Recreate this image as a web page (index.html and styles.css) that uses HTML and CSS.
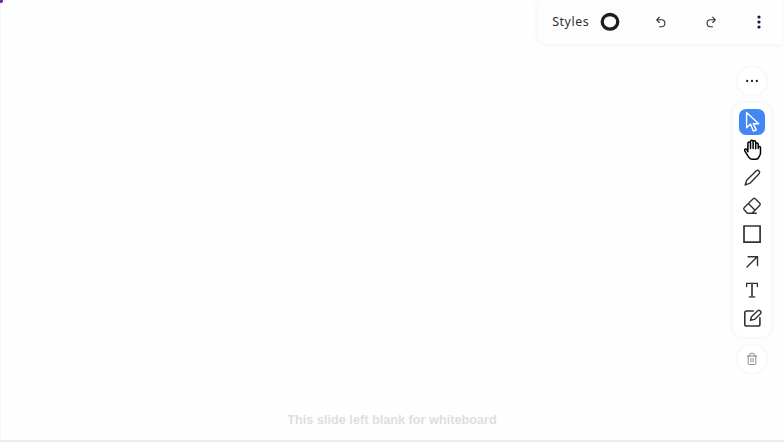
FILE: index.html
```
<!DOCTYPE html>
<html lang="en">
<head>
<meta charset="utf-8">
<title>Whiteboard</title>
<link rel="stylesheet" href="styles.css">
</head>
<body>
<main class="board">
  <span class="pen-mark"></span>
  <header class="topbar">
    <button class="styles-button"><span class="styles-label">Styles</span>
      <svg width="20" height="20" viewBox="0 0 20 20"><ellipse cx="10" cy="9.8" rx="7.8" ry="7.3" fill="none" stroke="#1d1d1d" stroke-width="3.3"/></svg>
    </button>
    <button class="history undo" aria-label="Undo"><svg viewBox="0 0 12 12"><path d="M4.3 1.2 1.7 3.8l2.6 2.7M1.9 3.8h4.5a3.5 3.5 0 0 1 0 7H4.5"/></svg></button>
    <button class="history redo" aria-label="Redo"><svg viewBox="0 0 12 12"><path d="m7.7 1.2 2.6 2.6-2.6 2.7M10.1 3.8H5.6a3.5 3.5 0 0 0 0 7h1.9"/></svg></button>
    <button class="menu" aria-label="Menu"><svg width="4" height="14" viewBox="0 0 4 14"><g fill="#0b1c33"><circle cx="2" cy="2" r="1.6"/><circle cx="2" cy="7" r="1.6"/><circle cx="2" cy="12" r="1.6"/></g></svg></button>
  </header>
  <aside class="dock">
    <button class="round" aria-label="More"><svg viewBox="0 0 28 28"><g fill="#222"><circle cx="9.2" cy="14" r="1.15"/><circle cx="14" cy="14" r="1.15"/><circle cx="18.8" cy="14" r="1.15"/></g></svg></button>
    <nav class="tools">
      <button class="tool selected" aria-label="Select"><svg viewBox="0 0 28 28"><path stroke="#fff" stroke-width="1.4" d="M8.6 4.5v15.2l3.9-3.8 2.8 7.2 3-1.2-3-6.2h5.4z"/></svg></button>
      <button class="tool hand" aria-label="Pan"><svg viewBox="0 0 28 28"><path stroke="#000" stroke-width="1.5" d="M9.9 15.8V7.3c0-1.8 2.6-1.8 2.6 0v5.2V5.8c0-2 2.6-2 2.6 0v6.7V6.2c0-1.9 2.6-1.9 2.6 0v6.5V8.3c0-1.7 2.5-1.7 2.5 0v4.2-.8c0-1.5 2.3-1.5 2.3 0v5.2c0 2.2-1.4 3.5-1.8 4.5-.6 1.5-1.3 1.9-2.7 1.9h-3.6c-1.8 0-2.5-.5-3.5-2l-4-6.2c-.9-1.7.6-2.9 1.9-1.6z"/></svg></button>
      <button class="tool" aria-label="Draw"><svg viewBox="0 0 28 28"><path d="m7.1 21.1 1.6-4.9 9.4-9.3c1.9-1.7 4.7 1 3 2.9L12 19.2zM7.4 20.6l1.3-.4"/></svg></button>
      <button class="tool" aria-label="Erase"><svg viewBox="0 0 28 28"><path d="m6.3 15.4 8.9-8.6c.8-.7 1.3-.7 2 0l4.6 4.4c.8.8.8 1.2 0 2l-7.7 8.1H9.3l-3-3.3c-1-1-1-1.6 0-2.6zM10.4 11.5l6.4 6.6M9.3 21.3h9"/></svg></button>
      <button class="tool" aria-label="Rectangle"><svg viewBox="0 0 28 28"><path stroke-linejoin="miter" stroke-width="1.7" d="M6 6h16.1v16.1H6z"/></svg></button>
      <button class="tool" aria-label="Arrow"><svg viewBox="0 0 28 28"><path stroke-width="1.4" stroke-linejoin="miter" d="M9 19 19.2 8.8M10.1 8.7h9.4v8.8"/></svg></button>
      <button class="tool" aria-label="Text"><svg viewBox="0 0 28 28"><path stroke-width="1.3" stroke-linejoin="miter" d="M8.6 10.5V7.4h10.8v3.1M11.2 20.9h5.6"/><path stroke="#555" stroke-width="2" d="M14 7.5v13.3"/></svg></button>
      <button class="tool" aria-label="Note"><svg viewBox="0 0 28 28"><path stroke-width="1.6" d="M15.3 7H8.5C7.2 7 6.8 7.5 6.8 8.7v11.5c0 1.3.5 1.8 1.8 1.8h11.5c1.3 0 1.8-.5 1.8-1.8v-6.4"/><path d="m12.5 16.3 1-3.5 6-5.8c1.8-1.7 4.6.7 2.9 2.7l-5.9 5.7z"/></svg></button>
    </nav>
    <button class="round trash" aria-label="Delete"><svg viewBox="0 0 28 28"><path d="M9.3 11h9.4M12 10.8V9c0-.5.2-.7.7-.7h2.6c.5 0 .7.2.7.7v1.8M10.2 11v7.6c0 .6.3.9.9.9h5.8c.6 0 .9-.3.9-.9V11M12.9 13.3v3.7M15.1 13.3v3.7"/></svg></button>
  </aside>
  <footer class="caption">This slide left blank for whiteboard</footer>
</main>
</body>
</html>
```
FILE: styles.css
```
* { box-sizing: border-box; }
body { margin: 0; background: #fff; }
button { border: 0; padding: 0; margin: 0; background: none; display: flex; align-items: center; justify-content: center; }
svg { display: block; fill: none; }

.board {
  position: relative;
  width: 784px;
  height: 442px;
  display: grid;
  grid-template-rows: 44px 1fr 36px;
  overflow: hidden;
  background: #fefefe;
  box-shadow: inset 1px 0 #f8f8f8;
}
.board::after { content: ""; position: absolute; left: 0; right: 0; bottom: 0; height: 2px; background: #e8edf1; }
.pen-mark { position: absolute; left: 0; top: 0; width: 3px; height: 3px; background: #7325a2; border-bottom-right-radius: 2px; }

.topbar {
  justify-self: end;
  width: 245px;
  height: 44px;
  margin-right: 2px;
  display: grid;
  grid-template-columns: 99px 50px 50px 46px;
  background: #fdfdfd;
  border-bottom-left-radius: 10px;
  box-shadow: 0 1px 5px rgba(0, 0, 0, .055);
}
.styles-button { justify-content: flex-start; padding-left: 15px; gap: 10px; }
.styles-label { width: 38px; font: 12.4px/16px "Noto Sans", sans-serif; letter-spacing: .55px; text-indent: -.5px; color: #303030; white-space: nowrap; }
.history svg { width: 12px; height: 12px; stroke: #333; stroke-width: 1.1; stroke-linecap: round; stroke-linejoin: round; }
.menu { background: #fefefe; }

.dock {
  justify-self: end;
  width: 38px;
  margin: 23px 13px 0 0;
  display: flex;
  flex-direction: column;
  align-items: center;
  gap: 8px;
}
.round { width: 28px; height: 28px; flex: none; border-radius: 50%; background: #fff; box-shadow: 0 0 4px rgba(0, 0, 0, .07); }
.round svg { width: 28px; height: 28px; }
.trash svg { stroke: #808080; stroke-width: .9; stroke-linecap: round; }
.tools {
  width: 38px;
  height: 234px;
  flex: none;
  padding: 5px;
  display: flex;
  flex-direction: column;
  background: #fff;
  border-radius: 10px;
  box-shadow: 0 0 5px rgba(0, 0, 0, .07);
}
.tool { width: 28px; height: 28px; border-radius: 7px; }
.tool svg { width: 28px; height: 28px; flex: none; stroke: #333; stroke-width: 1.4; stroke-linecap: round; stroke-linejoin: round; }
.selected { width: 26px; height: 26px; margin: 1px; background: #4387f4; }

.caption {
  grid-row: 3;
  padding-top: 5px;
  text-align: center;
  font: bold 12.7px/18px "Liberation Sans", sans-serif;
  color: #dedede;
}
```
